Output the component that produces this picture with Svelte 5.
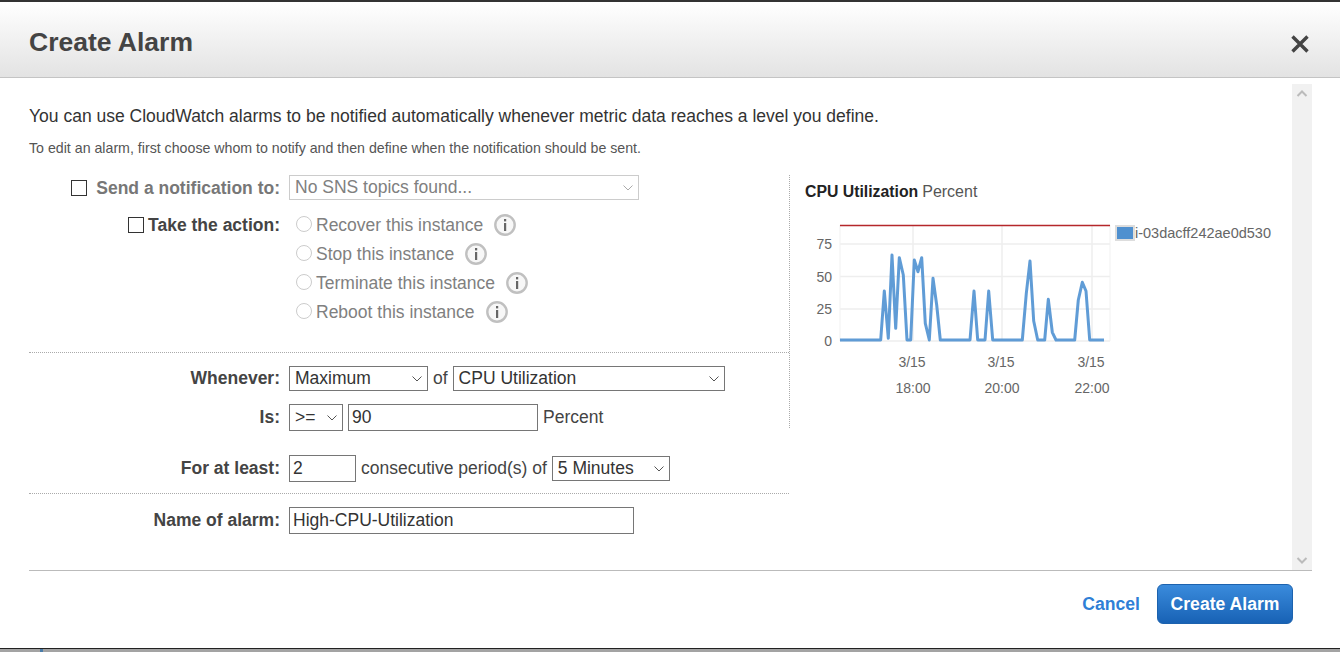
<script>
	const actions = [
		{ label: 'Recover this instance' },
		{ label: 'Stop this instance' },
		{ label: 'Terminate this instance' },
		{ label: 'Reboot this instance' }
	];

	// series traced off the chart, x/y in chart pixels
	const series = [
		[10, 115], [50.7, 115], [54.3, 66], [58.3, 113.3], [62, 30], [65.7, 103.3], [69.3, 32.7], [73.3, 50],
		[77, 115], [80.7, 115], [84.3, 35], [88, 46.7], [91.7, 32.7], [95.3, 98.3], [99.3, 115], [103, 53.3],
		[106.7, 80], [110.3, 115], [140, 115], [144, 66], [147.7, 115], [155, 115], [158.7, 66], [162.7, 115],
		[192.3, 115], [196.3, 68.3], [200, 36], [203.7, 96], [207.7, 115], [214.7, 115], [218.3, 74.3],
		[222.3, 107.3], [226, 115], [244.7, 115], [248.3, 75], [252.3, 57.3], [256, 66], [259.7, 115], [274, 115]
	];
	const points = series.map((p) => p.join(',')).join(' ');

	const yTicks = [
		{ label: '75', y: 19 },
		{ label: '50', y: 51.5 },
		{ label: '25', y: 84 },
		{ label: '0', y: 116 }
	];
	const xTicks = [
		{ x: 83, date: '3/15', time: '18:00' },
		{ x: 172, date: '3/15', time: '20:00' },
		{ x: 262, date: '3/15', time: '22:00' }
	];
</script>

<div class="page">
	<header class="head">
		<h1>Create Alarm</h1>
		<svg class="close" width="20" height="20" viewBox="0 0 20 20" aria-label="Close">
			<path d="M2.5 2.5 L17.5 17.5 M17.5 2.5 L2.5 17.5" stroke="#444" stroke-width="3.4" fill="none" />
		</svg>
	</header>

	<div class="body">
		<div class="content">
			<p class="intro">You can use CloudWatch alarms to be notified automatically whenever metric data reaches a level you define.</p>
			<p class="hint">To edit an alarm, first choose whom to notify and then define when the notification should be sent.</p>

			<div class="columns">
				<div class="form">
					<section class="notify">
						<div class="row">
							<label class="lab muted wide"><span class="check"></span>Send a notification to:</label>
							<select class="sel-topic" disabled><option>No SNS topics found...</option></select>
						</div>
						<div class="row top action-row">
							<label class="lab"><span class="check"></span>Take the action:</label>
							<div class="actions">
								{#each actions as a}
									<div class="action">
										<span class="radio"></span>
										<span>{a.label}</span>
										<svg class="info" width="22" height="22" viewBox="0 0 22 22">
											<circle cx="11" cy="11" r="9.7" fill="#f7f7f7" stroke="#c0c0c0" stroke-width="2.4" />
											<rect x="10" y="5" width="2.2" height="2.4" fill="#666" />
											<rect x="10" y="9" width="2.2" height="8" fill="#666" />
										</svg>
									</div>
								{/each}
							</div>
						</div>
					</section>

					<section class="rule">
						<div class="row">
							<span class="lab">Whenever:</span>
							<div class="ctrls">
								<select class="sel-stat"><option>Maximum</option></select>
								<span>of</span>
								<select class="sel-metric"><option>CPU Utilization</option></select>
							</div>
						</div>
						<div class="row is-row">
							<span class="lab">Is:</span>
							<div class="ctrls">
								<select class="sel-op"><option>&gt;=</option></select>
								<input class="in-value" value="90" />
								<span>Percent</span>
							</div>
						</div>
						<div class="row least-row">
							<span class="lab">For at least:</span>
							<div class="ctrls">
								<input class="in-periods" value="2" />
								<span>consecutive period(s) of</span>
								<select class="sel-period"><option>5 Minutes</option></select>
							</div>
						</div>
					</section>

					<section class="name">
						<div class="row">
							<span class="lab">Name of alarm:</span>
							<input class="in-name" value="High-CPU-Utilization" />
						</div>
					</section>
				</div>

				<aside class="chart">
					<div class="chart-title"><b>CPU Utilization</b> Percent</div>
					<div class="chart-wrap">
						<svg class="plot" width="310" height="190" viewBox="0 0 310 190">
							{#each yTicks as t}
								<line x1="10" x2="280" y1={t.y} y2={t.y} stroke="#eee" stroke-width="1.5" />
								<text class="tick" x="2" y={t.y + 5} text-anchor="end">{t.label}</text>
							{/each}
							{#each xTicks as t}
								<line x1={t.x} x2={t.x} y1="0" y2="116" stroke="#eee" stroke-width="1.5" />
								<text class="tick" x={t.x - 1} y="142" text-anchor="middle">{t.date}</text>
								<text class="tick" x={t.x} y="168" text-anchor="middle">{t.time}</text>
							{/each}
							<line x1="10" x2="10" y1="0" y2="116" stroke="#f1f1f1" />
							<line x1="280" x2="280" y1="0" y2="116" stroke="#f1f1f1" />
							<line x1="10" x2="280" y1="0.5" y2="0.5" stroke="#b5272b" stroke-width="1.5" />
							<polyline points={points} fill="none" stroke="#5394d2" stroke-width="3" stroke-linejoin="round" opacity="0.92" />
						</svg>
						<div class="legend"><span class="swatch"></span>i-03dacff242ae0d530</div>
					</div>
				</aside>
			</div>
		</div>

		<div class="scrollbar">
			<svg width="20" height="20" viewBox="0 0 20 20"><path d="M5.5 12 L10 7.5 L14.5 12" stroke="#bbb" stroke-width="2" fill="none" /></svg>
			<svg width="20" height="20" viewBox="0 0 20 20"><path d="M5.5 8 L10 12.5 L14.5 8" stroke="#bbb" stroke-width="2" fill="none" /></svg>
		</div>
	</div>

	<footer class="foot">
		<a class="cancel" href="#cancel">Cancel</a>
		<button class="primary">Create Alarm</button>
	</footer>
	<div class="edge"><span class="edge-mark"></span></div>
</div>

<style>
	:global(body) {
		margin: 0;
		background: #fff;
	}

	.page {
		height: 652px;
		box-sizing: border-box;
		display: flex;
		flex-direction: column;
		font-family: "Liberation Sans", Arial, sans-serif;
		font-size: 17.5px;
		color: #444;
		overflow: hidden;
	}

	.head {
		height: 78px;
		box-sizing: border-box;
		flex: none;
		display: flex;
		align-items: center;
		justify-content: space-between;
		padding: 5px 30px 0 29px;
		border-top: 2px solid #333;
		border-bottom: 1px solid #c4c4c4;
		background: linear-gradient(to bottom, #fff, #e3e3e3);
	}

	h1 {
		margin: 0;
		font-size: 26.5px;
		font-weight: 700;
		color: #444;
	}

	.close {
		margin-top: 3px;
	}

	.body {
		height: 492px;
		flex: none;
		display: flex;
		padding-right: 28px;
	}

	.content {
		flex: 1;
		padding-left: 29px;
		min-width: 0;
	}

	.intro {
		margin: 28px 0 0;
		line-height: 20px;
		color: #333;
	}

	.hint {
		margin: 14px 0 0;
		font-size: 14.2px;
		line-height: 16px;
		color: #555;
	}

	.columns {
		display: flex;
		margin-top: 19px;
	}

	.form {
		width: 760px;
		flex: none;
	}

	.row {
		display: grid;
		grid-template-columns: 251px 1fr;
		column-gap: 9px;
		align-items: center;
	}

	.row.top {
		align-items: start;
	}

	.lab {
		display: flex;
		justify-content: flex-end;
		align-items: center;
		gap: 4px;
		font-weight: 700;
		color: #444;
		line-height: 20px;
	}

	.rule .lab, .name .lab {
		margin-bottom: 2px;
	}

	.lab.muted {
		color: #777;
	}

	.lab.wide {
		gap: 9px;
	}

	.check {
		width: 14px;
		height: 14px;
		border: 1px solid #333;
		background: #fff;
	}

	select, input {
		font-family: inherit;
		font-size: 17.5px;
		color: #333;
		box-sizing: border-box;
		background-color: #fff;
		border: 1px solid #767676;
		border-radius: 0;
		margin: 0;
	}

	input {
		height: 27px;
		padding: 0 3px;
	}

	select {
		height: 25px;
		appearance: none;
		padding: 0 0 2px 5px;
		background-image: url("data:image/svg+xml,%3Csvg xmlns='http://www.w3.org/2000/svg' width='10' height='6'%3E%3Cpath d='M.5.5 5 5 9.5.5' fill='none' stroke='%23555'/%3E%3C/svg%3E");
		background-repeat: no-repeat;
		background-position: right 5px center;
	}

	select:disabled {
		color: #808080;
		border-color: #ccc;
		opacity: 1;
		background-image: url("data:image/svg+xml,%3Csvg xmlns='http://www.w3.org/2000/svg' width='10' height='6'%3E%3Cpath d='M.5.5 5 5 9.5.5' fill='none' stroke='%23aaa'/%3E%3C/svg%3E");
	}

	.sel-topic { width: 350px; }
	.sel-stat { width: 139px; }
	.sel-metric { width: 272px; }
	.sel-op { width: 54px; height: 27px; }
	.sel-period { width: 118px; }
	.in-value { width: 190px; }
	.in-periods { width: 67px; }
	.in-name { width: 345px; }

	.ctrls {
		display: flex;
		align-items: center;
		gap: 5px;
	}

	.action-row {
		margin-top: 15px;
	}

	.actions {
		display: flex;
		flex-direction: column;
		gap: 7px;
		margin-top: -1px;
		padding-left: 7px;
		color: #808080;
	}

	.action {
		display: flex;
		align-items: center;
		height: 22px;
	}

	.radio {
		width: 14px;
		height: 14px;
		border: 1px solid #ccc;
		border-radius: 50%;
		margin-right: 4px;
		margin-top: -2px;
	}

	.info {
		margin-left: 11px;
	}

	.rule {
		margin-top: 29px;
		border-top: 1px dotted #aaa;
		padding-top: 13px;
	}

	.is-row {
		margin-top: 13px;
	}

	.least-row {
		margin-top: 24px;
	}

	.name {
		margin-top: 11px;
		border-top: 1px dotted #aaa;
		padding-top: 13px;
	}

	.chart {
		flex: none;
		width: 440px;
		height: 253px;
		box-sizing: border-box;
		border-left: 1px dotted #aaa;
		padding-left: 15px;
		font-size: 16px;
	}

	.chart-title {
		margin-top: 8px;
		line-height: 18px;
		color: #555;
		display: flex;
		gap: 4px;
	}

	.chart-title b {
		color: #222;
		font-size: 15.8px;
	}

	.chart-wrap {
		margin-top: 24px;
		margin-left: 20px;
		display: flex;
		position: relative;
	}

	.plot {
		overflow: visible;
		flex: none;
		margin-left: 5px;
	}

	.tick {
		font-size: 14px;
		fill: #666;
	}

	.legend {
		position: absolute;
		left: 290px;
		top: 0;
		display: flex;
		align-items: center;
		font-size: 14.5px;
		color: #666;
		white-space: nowrap;
		line-height: 16px;
	}

	.swatch {
		display: inline-block;
		width: 16px;
		height: 12px;
		background: #4f90cf;
		border: 2px solid #ddd;
		box-sizing: content-box;
	}

	.scrollbar {
		flex: none;
		width: 20px;
		margin-top: 6px;
		background: #f1f1f1;
		display: flex;
		flex-direction: column;
		justify-content: space-between;
	}

	.foot {
		flex: 1;
		margin: 0 28px 0 29px;
		border-top: 1px solid #bbb;
		display: flex;
		justify-content: flex-end;
		align-items: flex-start;
		padding: 13px 19px 0 0;
		gap: 17px;
	}

	.cancel {
		font-weight: 700;
		font-size: 17.6px;
		color: #2f7fd6;
		text-decoration: none;
		line-height: 40px;
	}

	.primary {
		width: 136px;
		height: 40px;
		box-sizing: border-box;
		border: 1px solid #1c62ae;
		border-radius: 6px;
		background: linear-gradient(to bottom, #3a8bdc, #1862b5);
		color: #fff;
		font-family: inherit;
		font-weight: 700;
		font-size: 17.6px;
		padding: 0;
	}

	.edge {
		flex: none;
		height: 3px;
		border-top: 1px solid #222;
		background: #a3a3a3;
	}

	.edge-mark {
		display: block;
		width: 3px;
		height: 3px;
		margin-left: 40px;
		background: #4a7ca8;
	}
</style>
